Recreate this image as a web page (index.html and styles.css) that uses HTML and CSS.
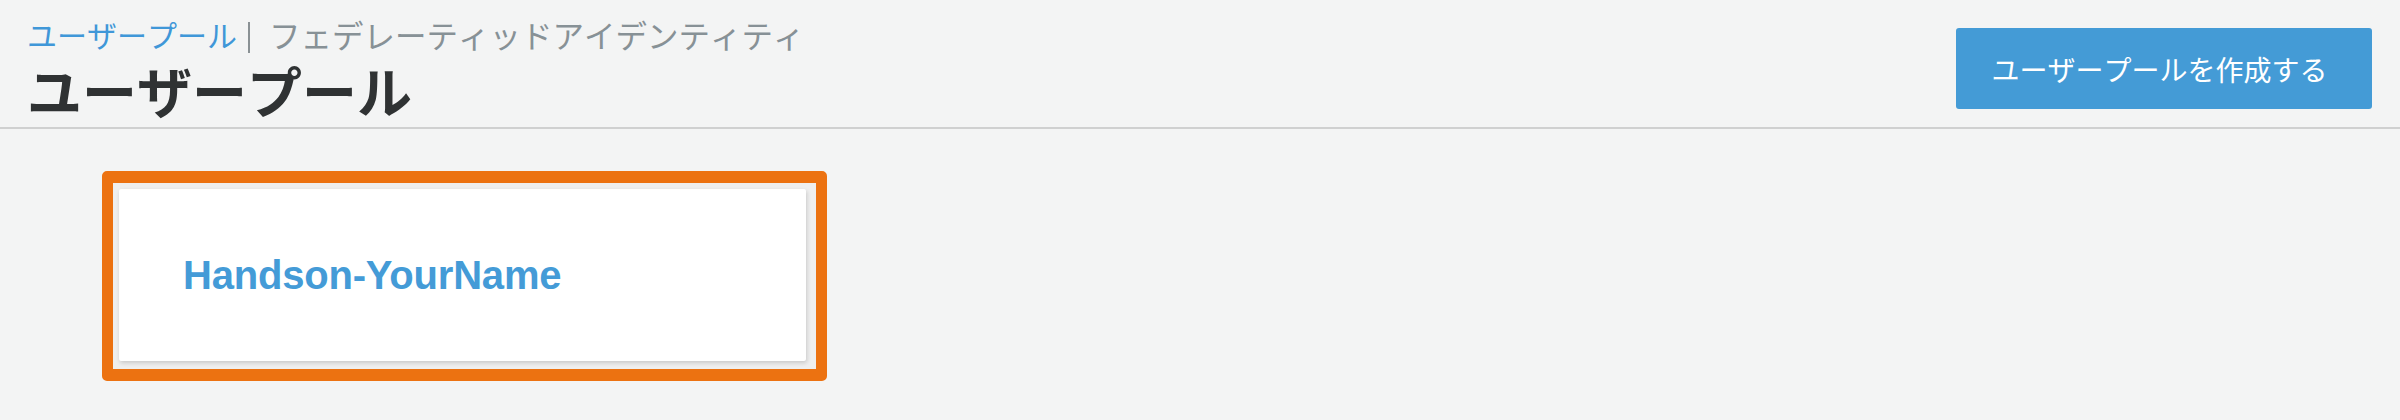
FILE: index.html
```html
<!DOCTYPE html>
<html lang="ja">
<head>
<meta charset="utf-8">
<title>ユーザープール</title>
<link rel="stylesheet" href="styles.css">
</head>
<body>
<header class="page-header">
  <div class="heading">
    <nav class="breadcrumb">
      <a class="crumb-active" href="#">ユーザープール</a><span class="crumb-sep"></span><a class="crumb" href="#">フェデレーティッドアイデンティティ</a>
    </nav>
    <h1 class="title">ユーザープール</h1>
  </div>
  <button class="primary-btn" type="button">ユーザープールを作成する</button>
</header>
<main class="content">
  <div class="highlight">
    <div class="pool-card">
      <a class="pool-name" href="#">Handson-YourName</a>
    </div>
  </div>
</main>
</body>
</html>
```
FILE: styles.css
```css
html, body {
  margin: 0;
  padding: 0;
  background: #f3f4f4;
}
body {
  width: 2400px;
  height: 420px;
  font-family: "Noto Sans CJK JP", "Noto Sans", sans-serif;
  font-kerning: none;
}
.page-header {
  display: flex;
  justify-content: space-between;
  align-items: flex-start;
  padding: 14px 28px 3px 27px;
  border-bottom: 2px solid #cfd0d0;
  height: 110px;
}
.heading {
  display: flex;
  flex-direction: column;
}
.breadcrumb {
  display: flex;
  align-items: center;
  line-height: 40px;
  height: 40px;
}
.crumb-active {
  font-size: 30px;
  color: #3f97d8;
  text-decoration: none;
}
.crumb-sep {
  display: inline-block;
  width: 0;
  height: 31px;
  border-left: 2px solid #8a9194;
  margin: 6px 19px 0 11px;
}
.crumb {
  font-size: 31.5px;
  color: #879196;
  text-decoration: none;
}
.title {
  margin: 0;
  font-size: 55px;
  line-height: 70px;
  font-weight: 700;
  color: #2f3233;
}
.primary-btn {
  margin-top: 14px;
  width: 416px;
  height: 81px;
  border: none;
  border-radius: 3px;
  background: #449bd6;
  color: #ffffff;
  font-family: "Noto Sans CJK JP", "Noto Sans", sans-serif;
  font-kerning: none;
  font-size: 28px;
  padding: 0 9px 0 0;
}
.content {
  padding: 42px 0 0 102px;
}
.highlight {
  box-sizing: border-box;
  width: 725px;
  height: 210px;
  border-style: solid;
  border-color: #ec7211;
  border-width: 12px 11px 12px 11px;
  border-radius: 5px;
  padding: 6px 10px 8px 6px;
  background: #efefef;
}
.pool-card {
  box-sizing: border-box;
  height: 172px;
  background: #ffffff;
  border-radius: 2px;
  box-shadow: 1px 2px 4px rgba(0, 0, 0, 0.16);
  display: flex;
  align-items: center;
  padding-left: 64px;
}
.pool-name {
  font-family: "Liberation Sans", Arial, sans-serif;
  font-weight: 700;
  font-size: 40px;
  color: #449bd7;
  text-decoration: none;
  font-kerning: normal;
  letter-spacing: -0.2px;
}
```
